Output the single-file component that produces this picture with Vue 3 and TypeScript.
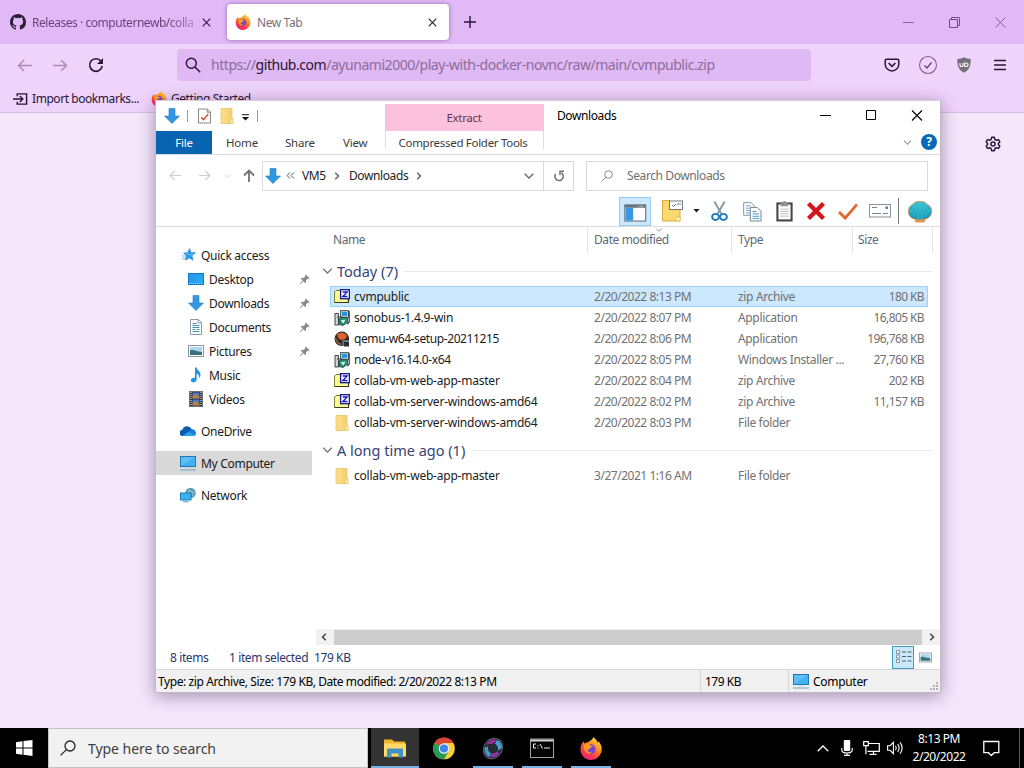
<script setup lang="ts">
interface NavItem { label: string; icon: string; nested?: boolean; pinned?: boolean; active?: boolean; gap?: boolean }
interface FileRow { name: string; icon: string; date: string; type: string; size: string; selected?: boolean; versioned?: boolean }
interface Group { title: string; files: FileRow[] }

const navItems: NavItem[] = [
  { label: 'Quick access', icon: 'star' },
  { label: 'Desktop', icon: 'desktop', nested: true, pinned: true },
  { label: 'Downloads', icon: 'down', nested: true, pinned: true },
  { label: 'Documents', icon: 'document', nested: true, pinned: true },
  { label: 'Pictures', icon: 'picture', nested: true, pinned: true },
  { label: 'Music', icon: 'music', nested: true },
  { label: 'Videos', icon: 'video', nested: true },
  { label: 'OneDrive', icon: 'cloud', gap: true },
  { label: 'My Computer', icon: 'computer', active: true, gap: true },
  { label: 'Network', icon: 'network', gap: true },
]

const groups: Group[] = [
  {
    title: 'Today (7)',
    files: [
      { name: 'cvmpublic', icon: 'zip', date: '2/20/2022 8:13 PM', type: 'zip Archive', size: '180 KB', selected: true },
      { name: 'sonobus-1.4.9-win', icon: 'installer', date: '2/20/2022 8:07 PM', type: 'Application', size: '16,805 KB' },
      { name: 'qemu-w64-setup-20211215', icon: 'qemu', date: '2/20/2022 8:06 PM', type: 'Application', size: '196,768 KB', versioned: true },
      { name: 'node-v16.14.0-x64', icon: 'installer', date: '2/20/2022 8:05 PM', type: 'Windows Installer ...', size: '27,760 KB', versioned: true },
      { name: 'collab-vm-web-app-master', icon: 'zip', date: '2/20/2022 8:04 PM', type: 'zip Archive', size: '202 KB' },
      { name: 'collab-vm-server-windows-amd64', icon: 'zip', date: '2/20/2022 8:02 PM', type: 'zip Archive', size: '11,157 KB' },
      { name: 'collab-vm-server-windows-amd64', icon: 'folder', date: '2/20/2022 8:03 PM', type: 'File folder', size: '' },
    ],
  },
  {
    title: 'A long time ago (1)',
    files: [
      { name: 'collab-vm-web-app-master', icon: 'folder', date: '3/27/2021 1:16 AM', type: 'File folder', size: '' },
    ],
  },
]

const tools = ['new-item', 'caret', 'cut', 'copy', 'paste', 'delete', 'check', 'rename']
const apps = [
  { icon: 'explorer', state: 'focused' },
  { icon: 'chrome', state: '' },
  { icon: 'orb', state: 'open' },
  { icon: 'terminal', state: 'open' },
  { icon: 'firefox', state: 'open' },
]
</script>

<template>
  <div class="screen">
    <svg class="defs" width="0" height="0" aria-hidden="true">
      <defs>
        <linearGradient id="ff-g" x1="0.8" y1="0" x2="0.2" y2="1">
          <stop offset="0" stop-color="#ffe03a" /><stop offset="0.4" stop-color="#ff8a1e" /><stop offset="0.75" stop-color="#ff3350" /><stop offset="1" stop-color="#e21d8a" />
        </linearGradient>
        <linearGradient id="sky" x1="0" y1="0" x2="1" y2="1">
          <stop offset="0" stop-color="#2196e8" /><stop offset="1" stop-color="#2fabf6" />
        </linearGradient>
        <linearGradient id="shell-g" x1="0" y1="0" x2="0" y2="1">
          <stop offset="0" stop-color="#3cc6d6" /><stop offset="1" stop-color="#1191b4" />
        </linearGradient>
        <linearGradient id="fold-g" x1="0" y1="0" x2="1" y2="0">
          <stop offset="0" stop-color="#fbdf88" /><stop offset="1" stop-color="#f3cf6e" />
        </linearGradient>

        <symbol id="github" viewBox="0 0 16 16"><path fill="#2a1f35" d="M8 0C3.58 0 0 3.58 0 8c0 3.54 2.29 6.53 5.47 7.59.4.07.55-.17.55-.38 0-.19-.01-.82-.01-1.49-2.01.37-2.53-.49-2.69-.94-.09-.23-.48-.94-.82-1.13-.28-.15-.68-.52-.01-.53.63-.01 1.08.58 1.23.82.72 1.21 1.87.87 2.33.66.07-.52.28-.87.51-1.07-1.78-.2-3.64-.89-3.64-3.95 0-.87.31-1.59.82-2.15-.08-.2-.36-1.02.08-2.12 0 0 .67-.21 2.2.82a7.6 7.6 0 0 1 4 0c1.53-1.04 2.2-.82 2.2-.82.44 1.1.16 1.92.08 2.12.51.56.82 1.27.82 2.15 0 3.07-1.87 3.75-3.65 3.95.29.25.54.73.54 1.48 0 1.07-.01 1.93-.01 2.2 0 .21.15.46.55.38A8.01 8.01 0 0 0 16 8c0-4.42-3.58-8-8-8z" /></symbol>
        <symbol id="firefox" viewBox="0 0 24 24">
          <path fill="url(#ff-g)" d="M1 13C1 9 3 6.500 4 4.500l1 2.300C6 5.800 7.300 5.500 8.500 5.700c1-.3 1.500-1 2.500-1.700C13 3 14 1.500 14.500 0c1.500 1.500 4 3.500 4.500 6l1-1.500C22 7 23.500 10 23.200 13.300 22.700 19.500 18 24 12 24S1 19 1 13z" />
          <circle cx="11.700" cy="12.800" r="5.200" fill="#7a45d0" />
          <path fill="#ff9a1f" d="M5 8c2-1.500 5-1 6.500 1 1 .1 2 .2 2.500.6-.6 1-2 1.300-2.800 1.500-.6 1.500-2 1.600-2.900 3 1 2 3.500 2.300 5 1.500-1 2-6 2.600-7.700-1.100C4.500 12 4.300 10 5 8z" />
        </symbol>
        <symbol id="x" viewBox="0 0 10 10"><path d="M.8.800l8.400 8.400M9.200.800L.8 9.200" fill="none" stroke="currentColor" stroke-width="1.200" /></symbol>
        <symbol id="arrow" viewBox="0 0 16 14"><path d="M7.500 1L1.500 7l6 6M1.500 7H16" fill="none" stroke="currentColor" stroke-width="1.500" /></symbol>
        <symbol id="reload" viewBox="0 0 16 16"><path d="M13 4.200A6.300 6.300 0 1 0 14.200 9" fill="none" stroke="currentColor" stroke-width="1.600" /><path d="M15 1v6H9z" fill="currentColor" /></symbol>
        <symbol id="lens" viewBox="0 0 16 16"><circle cx="6.300" cy="6.300" r="5" fill="none" stroke="currentColor" stroke-width="1.500" /><path d="M10 10l5.200 5.200" stroke="currentColor" stroke-width="1.500" /></symbol>
        <symbol id="lens-win" viewBox="0 0 16 16"><circle cx="10" cy="6" r="5" fill="none" stroke="currentColor" stroke-width="1.300" /><path d="M6.400 9.600L.6 15.400" stroke="currentColor" stroke-width="1.300" /></symbol>
        <symbol id="pocket" viewBox="0 0 16 14"><path d="M2.500 1.200h11q1.300 0 1.300 1.300v4C14.800 10 11.500 13 8 13S1.200 10 1.200 6.500v-4q0-1.300 1.300-1.300z" fill="none" stroke="currentColor" stroke-width="1.500" /><path d="M4.600 5L8 8.300 11.400 5" fill="none" stroke="currentColor" stroke-width="1.600" /></symbol>
        <symbol id="import" viewBox="0 0 16 14"><path d="M4.500 4V1.500h10v11h-10V10M0 7h10M7.300 3.800L10.500 7 7.300 10.200" fill="none" stroke="currentColor" stroke-width="1.500" /></symbol>
        <symbol id="gear" viewBox="0 0 24 24"><path d="M10 2h4l.8 3.200 2.200 1.200 3.200-1 2 3.500L20 11.200v1.600l2.200 2.300-2 3.500-3.200-1-2.200 1.200L14 22h-4l-.8-3.200L7 17.600l-3.200 1-2-3.500L4 12.800v-1.600L1.800 8.900l2-3.500 3.200 1 2.200-1.200z" fill="none" stroke="currentColor" stroke-width="2.200" stroke-linejoin="round" /><circle cx="12" cy="12" r="3.100" fill="none" stroke="currentColor" stroke-width="2.200" /></symbol>

        <symbol id="down" viewBox="0 0 16 16"><path d="M5 .5h6v7.500h4.500L8 15.600.5 8H5z" fill="#3296e0" stroke="#2680c8" stroke-width=".6" /></symbol>
        <symbol id="props" viewBox="0 0 14 16"><path d="M.5.500H10L13.500 4v11.500H.5z" fill="#fff" stroke="#7b7b7b" /><path d="M10 .5V4h3.500" fill="none" stroke="#7b7b7b" /><path d="M3.500 9.500L6 12l5-6" fill="none" stroke="#d0452e" stroke-width="1.600" /></symbol>
        <symbol id="folder" viewBox="0 0 16 16"><path d="M2 .5h11V10l1 .7v4.800H2z" fill="url(#fold-g)" stroke="#e3bf61" stroke-width=".7" /><path d="M11.500 11H14v4.500h-2.500z" fill="#fff0b8" stroke="#e3bf61" stroke-width=".5" /></symbol>
        <symbol id="star" viewBox="0 0 16 16"><path d="M9.500 1.500l1.500 4 4.500.2-3.500 3 1.200 4.600-4-2.300-4 2.300 1-4.600L3.500 6l4.300-.4z" fill="#259cec" stroke="#187cc4" stroke-width=".5" /><path d="M1.500 9h4M2.500 11.500h3M6 6l4 2 3-1" stroke="#74c3f6" stroke-width="1" fill="none" /></symbol>
        <symbol id="desktop" viewBox="0 0 16 16"><rect x=".5" y="2.500" width="15" height="11" fill="url(#sky)" stroke="#1678be" /><path d="M1 12.500h14" stroke="#9fd6f8" stroke-dasharray="1 1" /></symbol>
        <symbol id="document" viewBox="0 0 16 16"><path d="M2.500.500h8L13.500 3.500v12h-11z" fill="#fff" stroke="#8c9aa3" /><path d="M4.500 4.500h4M4.500 6.500h7M4.500 8.500h7M4.500 10.500h3M9 10.500h2.500M4.500 12.500h7" stroke="#3a93b4" /><path d="M10 1v3h3" fill="none" stroke="#8c9aa3" /></symbol>
        <symbol id="picture" viewBox="0 0 16 16"><rect x=".5" y="2.500" width="15" height="11" fill="#fff" stroke="#8b969e" /><rect x="2" y="4" width="12" height="8" fill="#a9d6ef" /><path d="M2 7.500c4-1.500 6 1.500 12 1.500v3H2z" fill="#3c7184" /></symbol>
        <symbol id="music" viewBox="0 0 16 16"><path d="M7 .5h1.700c.4 3 4 3.800 3.800 7.200-.1 1.700-.8 2.700-1.800 3.600.8-2.600-.2-4.100-2-4.800v6c0 2-2 3.200-4.200 2.800C2.500 14.900 2.300 12 4.500 11.100 5.500 10.700 6.300 10.700 7 11z" fill="#2196e8" /></symbol>
        <symbol id="video" viewBox="0 0 16 16"><rect x="1.500" y=".5" width="13" height="15" fill="#2d2d35" stroke="#6d6d74" /><path d="M3 1v14M13 1v14" stroke="#e9e9ec" stroke-width="1.200" stroke-dasharray="1 1" /><path d="M4.500 1.500h7v6h-7zM4.500 8.500h7v6h-7z" fill="#4a78c8" /><path d="M4.500 5l3-2 4 3v1.500h-7zM4.500 12l3-2 4 3v1.500h-7z" fill="#b98344" /></symbol>
        <symbol id="cloud" viewBox="0 0 16 16"><path d="M3 13a3 3 0 0 1-.6-6A5 5 0 0 1 11.500 6C14.500 6.500 16 8.200 16 10.200 16 12 14.800 13 13 13z" fill="#1680d8" /><path d="M2.400 7A5 5 0 0 1 11.500 6l-4 3L3 13a3 3 0 0 1-.6-6z" fill="#0a5cab" /><path d="M2.500 12.800L9 9l6 3.200c-.5.500-1.200.8-2 .8H3z" fill="#2ba2ee" /></symbol>
        <symbol id="computer" viewBox="0 0 16 16"><rect x=".5" y="1.500" width="15" height="10" fill="#42b2f4" stroke="#2278ae" /><path d="M1 2h14L1 11z" fill="#7accf8" opacity=".5" /><path d="M5 13h6" stroke="#c5d5df" /><path d="M0 15h16" stroke="#6aa5c7" /></symbol>
        <symbol id="network" viewBox="0 0 16 16"><circle cx="10.500" cy="6" r="5.300" fill="#5f9ab8" /><path d="M8 1.500c3 2 5 5 5 8M7 5c3-1 6-1 9 1" stroke="#a9cbd9" fill="none" stroke-width=".8" /><rect x=".5" y="6" width="10.500" height="7" fill="#41b1ee" stroke="#1c7eb6" /><path d="M3 14.800h5.500" stroke="#4d9ec7" /></symbol>
        <symbol id="pin" viewBox="0 0 12 12"><path d="M7.300.5L11.500 4.700l-1.200.7L9.200 5.300 7.700 7c.3 1.300.1 2.200-.7 3.100L4.800 8 1 11.400.6 11 4 7.200 1.900 5c.9-.8 1.800-1 3.100-.7l1.700-1.500-.1-1.100z" fill="#858d93" /></symbol>

        <symbol id="zip" viewBox="0 0 16 16"><path d="M.6 3l1.500-1.500H7v11.900H.6z" fill="#ffffa6" stroke="#77772a" /><path d="M.6 13.500H14.500V10" fill="none" stroke="#39391c" stroke-width="1.200" /><path d="M1.200 5H13v7.900H1.200z" fill="#fbfb8e" /><rect x="6.600" y=".7" width="8.800" height="9" fill="#fff" stroke="#15158e" stroke-width="1.300" /><path d="M8.700 3h4.500L8.700 7.500h4.700" fill="none" stroke="#1717c4" stroke-width="1.300" /></symbol>
        <symbol id="installer" viewBox="0 0 16 16"><rect x="6.500" y=".5" width="8" height="7" fill="#b9c4cb" stroke="#566" /><rect x="8" y="1.800" width="5" height="4" fill="#2295d8" /><path d="M15.200 1v11l-2 2" fill="none" stroke="#303840" stroke-width="1.200" /><path d="M1 3.500h3.500v11.500H1zM3 7h5" fill="#cfd4d6" stroke="#444" stroke-width="1" /><path d="M5 9l3.500-1.800 5 1v4L9 15.500l-4-1z" fill="#288e75" stroke="#21403a" stroke-width=".8" /><path d="M6.500 10.500l5-1-2 4z" fill="#d8f4e8" /></symbol>
        <symbol id="qemu" viewBox="0 0 16 16"><circle cx="7.800" cy="7.800" r="7.300" fill="#332725" /><path d="M3 3.500C6 1 10 1 12.500 4c1 2-1 4-3 4.500C7 9 4 9 3 3.500z" fill="#df642c" /><path d="M1.500 7c1 4 4 6 6 6.300" stroke="#8e604c" fill="none" stroke-width="1.500" /><path d="M8.500 9h6v6h-6z" fill="#687986" /><path d="M10 11h5v4.500h-5z" fill="#252f35" /></symbol>

        <symbol id="pane" viewBox="0 0 24 20"><rect x=".7" y="2" width="22" height="17" fill="#fff" stroke="#687984" stroke-width="1.200" /><path d="M1 3.500h21.500" stroke="#67737b" stroke-width="3" /><rect x="1.500" y="5" width="8" height="13.500" fill="#3499e1" /><path d="M15 3.500h6" stroke="#fff" stroke-dasharray="1 1" /></symbol>
        <symbol id="new-item" viewBox="0 0 22 22"><path d="M.5.500h7V5H18v16H.5z" fill="#fbd96f" stroke="#d9ae3e" /><path d="M14 17h4v4h-4z" fill="#fff2b6" stroke="#d9ae3e" stroke-width=".6" /><rect x="7.500" y="1" width="13" height="8.500" fill="#fff" stroke="#777" /><path d="M10 5l1.500 1.500L14 4M15 4h4" stroke="#5681a0" fill="none" /></symbol>
        <symbol id="caret" viewBox="0 0 8 5"><path d="M0 0h8L4 4.500z" fill="#222" /></symbol>
        <symbol id="cut" viewBox="0 0 18 22"><path d="M3.500 1l7.500 13M14.500 1L7 14" stroke="#8a98a2" stroke-width="2" fill="none" /><ellipse cx="4.800" cy="17.300" rx="3.600" ry="3.200" fill="none" stroke="#1a78bd" stroke-width="2" /><ellipse cx="13.200" cy="17.300" rx="3.600" ry="3.200" fill="none" stroke="#1a78bd" stroke-width="2" /></symbol>
        <symbol id="copy" viewBox="0 0 20 22"><path d="M.7 1.700h8l3 3V15H.7z" fill="#fff" stroke="#7f95a2" /><path d="M3 5h5M3 7.500h4M3 10h4M3 12.500h4" stroke="#6da3c5" /><path d="M7.700 6.700H15l4 4V21H7.700z" fill="#fff" stroke="#6c7f8b" /><path d="M10 11h4M10 13.500h7M10 16h7M10 18.500h7" stroke="#3f8fc2" /></symbol>
        <symbol id="paste" viewBox="0 0 18 22"><rect x="1.500" y="3" width="15" height="18" fill="#fff" stroke="#4b4341" stroke-width="2.200" /><path d="M5 2h2.500a1.500 1.500 0 0 1 3 0H13v4H5z" fill="#8c9295" /><path d="M4.500 9h9M4.500 11.500h9M4.500 14h9M4.500 16.500h9" stroke="#b7bcc0" /></symbol>
        <symbol id="delete" viewBox="0 0 20 20"><path d="M2.500 2.500l15 15M17.500 2.500l-15 15" stroke="#d4141c" stroke-width="4.300" /></symbol>
        <symbol id="check" viewBox="0 0 22 18"><path d="M1.500 9.500l6.500 6.500L20.500 1.500" fill="none" stroke="#e2682d" stroke-width="3" /></symbol>
        <symbol id="rename" viewBox="0 0 22 14"><rect x=".5" y=".5" width="21" height="12.500" fill="#fff" stroke="#87929a" /><path d="M3 3.500h5M3 9.500h9M14 9.500h5" stroke="#79868f" /><rect x="16.500" y="2.500" width="2.500" height="2.500" fill="#4b84b0" /></symbol>
        <symbol id="shell" viewBox="0 0 24 22"><path d="M6 17L7.500 21.500h9l1.500-4.500z" fill="#de9b58" /><path d="M12 .7c3-.4 5.500.5 7.500 3 3 1 4.300 4 4 7.500-.2 3-2.500 6.300-6 6.600L12 19l-5.500-1.200C3 17.500.7 14.500.5 11.200.3 7.700 1.500 4.700 4.500 3.700 6.500 1.200 9 .3 12 .7z" fill="url(#shell-g)" stroke="#c28b50" stroke-width=".9" /><path d="M12 18.500V2M11 18L6.500 4M13 18l4.500-14M10 18L2 9M14 18l8-9" stroke="#62d6e0" stroke-width=".7" opacity=".6" fill="none" /></symbol>
        <symbol id="chev-r" viewBox="0 0 6 8"><path d="M1.200.800L4.500 4 1.200 7.200" fill="none" stroke="currentColor" stroke-width="1.500" /></symbol>
        <symbol id="chev-d" viewBox="0 0 10 6"><path d="M.7.700L5 5 9.300.700" fill="none" stroke="currentColor" stroke-width="1.300" /></symbol>

        <symbol id="explorer" viewBox="0 0 24 22"><path d="M1 2h8l2 2h11v15H1z" fill="#eeb62d" /><path d="M1 6h22v13H1z" fill="#ffda68" /><path d="M4 12q0-1 1-1h14q1 0 1 1v8h-4.500v-4h-7v4H4z" fill="#3f92c4" /></symbol>
        <symbol id="chrome" viewBox="0 0 24 24"><circle cx="12" cy="12" r="11.300" fill="#f9cc3a" /><path d="M12 12L2.200 6.300A11.300 11.300 0 0 1 21.800 6.300H12z" fill="#dc4437" /><path d="M2.200 6.300A11.300 11.300 0 0 0 12 23.300L16.700 15 12 12z" fill="#249b5b" /><circle cx="12" cy="12" r="5.500" fill="#f5f5f5" /><circle cx="12" cy="12" r="4.300" fill="#4485ed" /></symbol>
        <symbol id="orb" viewBox="0 0 24 24"><ellipse cx="12" cy="12" rx="9.500" ry="11.300" transform="rotate(35 12 12)" fill="#252a35" stroke="#626574" /><path d="M5 8Q9 1 16 3L12 7Q7 7 5 8z" fill="#a02c9e" /><path d="M16 3q6 2 5 9l-4 2q0-5-3-7z" fill="#4b9fd0" /><path d="M8 21q-5-2-5-10l4-1q-1 5 3 7z" fill="#4598c9" /><path d="M18 18q-4 4-10 3l3-4q4 0 6-3z" fill="#8b35a5" /><circle cx="12" cy="12" r="5" fill="#272b34" /></symbol>
        <symbol id="terminal" viewBox="0 0 24 20"><rect x=".5" y=".5" width="23" height="18.500" fill="#050505" stroke="#a3a3a3" /><path d="M1 2h22" stroke="#d2d2d2" stroke-width="2" /><path d="M6 5.500H3.500v4H6M8 6.500v1M8 9v1M10 5.500l2.500 4.500M14 9.500h6" stroke="#eee" fill="none" /></symbol>
      </defs>
    </svg>

    <header class="tabstrip">
      <div class="tab">
        <svg class="i16"><use href="#github" /></svg>
        <span class="tab-title faded">Releases · computernewb/colla</span>
        <svg class="i9"><use href="#x" /></svg>
      </div>
      <div class="tab current">
        <svg class="i16"><use href="#firefox" /></svg>
        <span class="tab-title">New Tab</span>
        <svg class="i9"><use href="#x" /></svg>
      </div>
      <svg class="plus" viewBox="0 0 12 12"><path d="M6 0v12M0 6h12" stroke="#2b1538" stroke-width="1.400" /></svg>
      <div class="browser-controls">
        <svg width="11" height="11"><path d="M0 5.500h11" stroke="#87609d" /></svg>
        <svg width="11" height="11"><path d="M.5 2.500h8v8h-8zM2.500 2V.500h8v8H9" fill="none" stroke="#754c89" /></svg>
        <svg width="11" height="11"><path d="M.5.500l10 10M10.500.500l-10 10" fill="none" stroke="#87609d" /></svg>
      </div>
    </header>

    <nav class="navbar">
      <svg class="nav-arrow"><use href="#arrow" /></svg>
      <svg class="nav-arrow forward"><use href="#arrow" /></svg>
      <svg class="i16 reload"><use href="#reload" /></svg>
      <div class="urlbar">
        <svg class="i16"><use href="#lens" /></svg>
        <span class="url">https://<b>github.com</b>/ayunami2000/play-with-docker-novnc/raw/main/cvmpublic.zip</span>
      </div>
      <div class="nav-actions">
        <svg class="pocket"><use href="#pocket" /></svg>
        <svg width="20" height="20" viewBox="0 0 20 20"><circle cx="10" cy="10" r="8.500" fill="none" stroke="#805e90" stroke-width="1.100" /><path d="M6.500 10.500L9 13l4.500-5.500" fill="none" stroke="#643e76" stroke-width="1.200" /></svg>
        <svg class="shield" width="16" height="16" viewBox="0 0 16 16"><path d="M8 .3C10 1.500 12 2 14.700 2c.2 6-1 11-6.700 13.700C2.300 13 1.100 8 1.300 2 4 2 6 1.500 8 .3z" fill="#77717b" /><path d="M4 6v2.500q0 1 1.500 1T7 8.500V6M8.700 6v3.500h1.600q1.800 0 1.800-1.700T10.300 6z" fill="none" stroke="#fff" stroke-width="1.100" /></svg>
        <svg width="12" height="12"><path d="M0 1.500h12M0 6h12M0 10.500h12" stroke="#2b1538" stroke-width="1.500" /></svg>
      </div>
    </nav>

    <div class="bookmarks">
      <svg class="import"><use href="#import" /></svg>
      <span class="bookmark-import">Import bookmarks...</span>
      <svg class="i16"><use href="#firefox" /></svg>
      <span class="bookmark-start">Getting Started</span>
    </div>

    <main class="newtab">
      <svg class="gear"><use href="#gear" /></svg>
    </main>

    <section class="window">
      <div class="ribbon">
        <div class="ribbon-left">
          <div class="quickbar">
            <svg class="i16"><use href="#down" /></svg>
            <i class="vr"></i>
            <svg class="props"><use href="#props" /></svg>
            <svg class="i16 qb-folder"><use href="#folder" /></svg>
            <svg class="qb-caret" width="7" height="7"><path d="M0 .7h7" stroke="#111" /><path d="M0 3h7L3.500 6.500z" fill="#111" /></svg>
            <i class="vr"></i>
          </div>
          <div class="ribbon-tabs">
            <span class="file-tab">File</span>
            <span class="t-home">Home</span>
            <span class="t-share">Share</span>
            <span class="t-view">View</span>
          </div>
        </div>
        <div class="context-tab">
          <div class="context-title">Extract</div>
          <div class="context-body">Compressed Folder Tools</div>
        </div>
        <div class="ribbon-right">
          <div class="titlebar">
            <span class="win-title">Downloads</span>
            <div class="win-controls">
              <svg width="11" height="11"><path d="M0 4.500h11" stroke="#000" /></svg>
              <svg width="11" height="11"><path d="M.5-.5h9v9h-9z" fill="none" stroke="#000" /></svg>
              <svg width="11" height="11"><path d="M0-.5l10 10M10-.5l-10 10" stroke="#000" stroke-width="1.100" /></svg>
            </div>
          </div>
          <div class="help-row">
            <svg class="help-chev"><use href="#chev-d" /></svg>
            <span class="help">?</span>
          </div>
        </div>
      </div>

      <div class="address-row">
        <svg class="a-back"><use href="#arrow" /></svg>
        <svg class="a-back fwd"><use href="#arrow" /></svg>
        <svg class="a-recent"><use href="#chev-d" /></svg>
        <svg class="a-up" viewBox="0 0 12 14"><path d="M1 6.500l5-5 5 5M6 1.500V13" fill="none" stroke="#717171" stroke-width="1.800" /></svg>
        <div class="path">
          <svg class="i16"><use href="#down" /></svg>
          <svg class="laquo" viewBox="0 0 9 7"><path d="M4 .5L1 3.500l3 3M8 .5L5 3.500l3 3" fill="none" stroke="#555" /></svg>
          <span class="crumb-vm">VM5</span>
          <svg class="chev"><use href="#chev-r" /></svg>
          <span class="crumb-dl">Downloads</span>
          <svg class="chev"><use href="#chev-r" /></svg>
          <svg class="path-drop"><use href="#chev-d" /></svg>
        </div>
        <div class="refresh">
          <svg width="12" height="12" viewBox="0 0 12 12"><path d="M8.300 2.800A4.200 4.200 0 1 1 2.600 4" fill="none" stroke="#6d6d6d" stroke-width="1.500" /><path d="M1.500 1.300h4v4" fill="none" stroke="#6d6d6d" stroke-width="1.400" transform="matrix(-1 0 0 1 12.500 0)" /></svg>
        </div>
        <div class="searchbox">
          <svg class="s-lens"><use href="#lens-win" /></svg>
          <span>Search Downloads</span>
        </div>
      </div>

      <div class="toolbar">
        <span class="tool-active"><svg class="tool-pane"><use href="#pane" /></svg></span>
        <svg v-for="t in tools" :key="t" :class="['tool', t]"><use :href="'#' + t" /></svg>
        <i class="tool-sep"></i>
        <svg class="tool shell"><use href="#shell" /></svg>
      </div>

      <div class="content">
        <aside class="sidebar">
          <div v-for="item in navItems" :key="item.label" :class="['nav-item', { nested: item.nested, active: item.active, gap: item.gap }]">
            <svg class="i16"><use :href="'#' + item.icon" /></svg>
            <span>{{ item.label }}</span>
            <svg v-if="item.pinned" class="pin"><use href="#pin" /></svg>
          </div>
        </aside>

        <div class="listing">
          <div class="columns">
            <span class="c-name">Name</span>
            <span class="c-date">Date modified<svg class="sort"><use href="#chev-d" /></svg></span>
            <span class="c-type">Type</span>
            <span class="c-size">Size</span>
          </div>
          <div class="groups">
            <template v-for="g in groups" :key="g.title">
              <div class="group-head">
                <svg class="g-chev"><use href="#chev-d" /></svg>
                <span>{{ g.title }}</span>
                <i></i>
              </div>
              <div v-for="f in g.files" :key="f.name + f.icon" :class="['row', { selected: f.selected, versioned: f.versioned }]">
                <svg class="i16"><use :href="'#' + f.icon" /></svg>
                <span class="r-name">{{ f.name }}</span>
                <span class="r-date">{{ f.date }}</span>
                <span class="r-type">{{ f.type }}</span>
                <span class="r-size">{{ f.size }}</span>
              </div>
            </template>
          </div>
          <div class="hscroll">
            <svg class="chev left"><use href="#chev-r" /></svg>
            <div class="thumb"></div>
            <svg class="chev"><use href="#chev-r" /></svg>
          </div>
        </div>
      </div>

      <div class="details">
        <span class="d-count">8 items</span>
        <span class="d-sel">1 item selected</span>
        <span class="d-size">179 KB</span>
        <div class="views">
          <span class="view-on">
            <svg width="17" height="14"><path d="M1.500.500h3v3h-3zM1.500 5h3v3h-3zM1.500 9.500h3v3h-3z" fill="#fff" stroke="#6d7e89" stroke-width=".8" /><path d="M7 2h4M12.500 2h4M7 6.500h4M12.500 6.500h4M7 11h4M12.500 11h4" stroke="#4d6370" /></svg>
          </span>
          <svg class="view-thumb"><use href="#picture" /></svg>
        </div>
      </div>

      <footer class="statusbar">
        <span class="s-info">Type: zip Archive, Size: 179 KB, Date modified: 2/20/2022 8:13 PM</span>
        <span class="s-size">179 KB</span>
        <span class="s-zone"><svg class="i16"><use href="#computer" /></svg><em>Computer</em></span>
        <svg class="grip" width="9" height="9"><path d="M6 1h2M3 4h2M6 4h2M0 7h2M3 7h2M6 7h2" stroke="#b4b4b4" stroke-width="2" /></svg>
      </footer>
    </section>

    <div class="taskbar">
      <div class="start">
        <svg width="17" height="16" viewBox="0 0 17 16"><path d="M0 2.200L6.500 1.200V7.400H0zM7.500 1.100L16.500 0v7.400h-9zM0 8.500h6.500v6.200L0 13.800zM7.500 8.500h9V16l-9-1.200z" fill="#fff" /></svg>
      </div>
      <div class="task-search">
        <svg class="i16"><use href="#lens-win" /></svg>
        <span>Type here to search</span>
      </div>
      <div class="apps">
        <span v-for="a in apps" :key="a.icon" :class="['app', a.state]"><svg class="app-icon"><use :href="'#' + a.icon" /></svg></span>
      </div>
      <div class="tray">
        <svg width="12" height="7" viewBox="0 0 12 7"><path d="M.7 6.300L6 1l5.300 5.300" fill="none" stroke="#fff" stroke-width="1.300" /></svg>
        <svg class="mic" width="12" height="16" viewBox="0 0 12 16"><rect x="2.800" y="0" width="6.400" height="11" rx="1" fill="#fff" /><path d="M.8 8v2.500Q1.500 13 6 13t5.200-2.500V8M6 13v2.500M3 15.400h6" fill="none" stroke="#fff" stroke-width="1.100" /></svg>
        <svg width="17" height="14" viewBox="0 0 17 14"><path d="M5.500 2.500h10.800v7.800H4.500M10.500 10.300V13M6.500 13.300h7M.7.700h4.600v4H.7zM2.900 4.700v8.500" fill="none" stroke="#fff" stroke-width="1.200" /></svg>
        <svg class="speaker" width="17" height="14" viewBox="0 0 17 14"><path d="M.6 4.700h2.500L6.400 1.300v11.400L3.100 9.300H.6zM8.500 4.800q1.500 2.200 0 4.400M10.700 3.200q2.800 3.800 0 7.600M13 1.400q4.300 5.600 0 11.200" fill="none" stroke="#fff" stroke-width="1.100" /></svg>
        <div class="clock"><span class="time">8:13 PM</span><span class="day">2/20/2022</span></div>
        <svg width="17" height="17" viewBox="0 0 17 17"><path d="M.8 1.500h15v11.200h-4.600L8.300 15.500l-2.800-2.800H.8z" fill="none" stroke="#fff" stroke-width="1.300" /></svg>
        <i class="peek"></i>
      </div>
    </div>
  </div>
</template>

<style>
html, body { margin: 0; overflow: hidden; }
</style>

<style scoped>
.screen { position: relative; width: 1024px; height: 768px; overflow: hidden; display: flex; flex-direction: column; background: #f4e6fb; font: 12px/16px "Noto Sans", "Open Sans", sans-serif; letter-spacing: -0.4px; color: #000; white-space: nowrap; box-sizing: border-box; }
.screen *, .screen *::before { box-sizing: border-box; }
svg { display: block; flex: none; overflow: visible; }
.defs { position: absolute; }
.i16 { width: 16px; height: 16px; }
.i9 { width: 9px; height: 9px; }

.tabstrip { height: 44px; flex: none; background: #e0b9f6; display: flex; align-items: center; color: #2b1538; }
.tab { display: flex; align-items: center; height: 36px; width: 226px; padding: 0 14px 0 10px; }
.tab-title { margin: 1px 0 0 6px; flex: 1; color: #684579; }
.tab-title.faded { flex: none; width: 166px; margin-right: 4px; letter-spacing: -0.46px; mask-image: linear-gradient(to right, #000 82%, rgba(0, 0, 0, 0.25)); }
.tab.current { width: 222px; margin-left: 1px; padding: 0 12px 0 8px; background: #fff; border-radius: 4px; box-shadow: 0 0 4px rgba(80, 20, 110, 0.5); }
.tab.current .tab-title { color: #77707c; }
.plus { width: 12px; height: 12px; margin-left: 15px; }
.browser-controls { display: flex; gap: 35px; margin-left: auto; padding-right: 18px; }

.navbar { height: 42px; flex: none; background: #eed3fb; display: flex; align-items: center; padding-left: 17px; color: #2b1538; }
.nav-arrow { width: 15px; height: 13px; color: #a88bb7; }
.nav-arrow.forward { transform: scaleX(-1); margin-left: 21px; }
.reload { margin-left: 20px; }
.urlbar { width: 634px; height: 32px; margin-left: 73px; padding-left: 8px; display: flex; align-items: center; background: #deb9f3; border-radius: 4px; }
.url { margin-left: 10px; font-size: 14px; color: #8d6c9c; letter-spacing: -0.46px; }
.url b { font-weight: 400; color: #2b1538; }
.nav-actions { display: flex; align-items: center; margin-left: 73px; }
.pocket { width: 16px; height: 14px; margin-right: 18px; }
.shield { margin: 0 22px 0 18px; }

.bookmarks { height: 27px; flex: none; background: #eed3fb; border-bottom: 1px solid #d6bfe0; display: flex; align-items: center; padding-left: 13px; color: #2b1538; letter-spacing: -0.44px; }
.import { width: 15px; height: 14px; }
.bookmark-import { width: 108px; margin: 0 11px 0 4px; }
.bookmark-start { margin-left: 4px; }
.newtab { flex: 1; display: flex; justify-content: flex-end; align-items: flex-start; padding: 23px 23px 0 0; }
.gear { width: 16px; height: 16px; color: #2b1538; }

.window { position: absolute; left: 155px; top: 100px; width: 786px; height: 593px; display: flex; flex-direction: column; background: #fff; border: 1px solid #c3b7c9; border-top-color: #dccbe2; box-shadow: 0 3px 16px rgba(50, 25, 65, 0.42); }
.ribbon { height: 54px; flex: none; display: flex; border-bottom: 1px solid #dadbdc; }
.ribbon-left { width: 229px; }
.quickbar { height: 30px; display: flex; align-items: center; padding-left: 8px; }
.vr { width: 1px; height: 12px; background: #999; margin-left: 7px; }
.props { width: 13px; height: 16px; margin-left: 10px; }
.qb-folder { margin-left: 8px; }
.qb-caret { margin: 3px 1px 0 7px; }
.ribbon-tabs { height: 23px; display: flex; align-items: center; font-size: 11.5px; color: #3b3b3b; letter-spacing: -0.2px; }
.file-tab { width: 56px; height: 23px; line-height: 23px; text-align: center; background: #0863b0; color: #fff; }
.t-home { width: 59px; padding-left: 14px; }
.t-share { width: 58px; padding-left: 14px; }
.t-view { padding-left: 14px; }
.context-tab { width: 159px; margin-top: 3px; text-align: center; font-size: 11.5px; letter-spacing: -0.3px; color: #3b3b3b; }
.context-title { height: 27px; line-height: 28px; padding-right: 1px; background: #fcc2dd; color: #643349; }
.context-body { height: 18px; line-height: 24px; padding-right: 3px; border-left: 1px solid #ddd; border-right: 1px solid #ddd; }
.ribbon-right { flex: 1; }
.titlebar { height: 30px; display: flex; align-items: center; padding-left: 13px; }
.win-controls { display: flex; gap: 35px; margin-left: auto; padding-right: 17px; }
.help-row { height: 22px; display: flex; justify-content: flex-end; align-items: center; padding-right: 3px; color: #999; }
.help-chev { width: 9px; height: 5px; margin-right: 9px; }
.help { width: 16px; height: 16px; border-radius: 50%; background: #0a68b5; color: #fff; font-weight: 700; text-align: center; letter-spacing: 0; }

.address-row { height: 41px; flex: none; display: flex; align-items: center; padding-left: 13px; }
.a-back { width: 12px; height: 11px; color: #cecece; }
.a-back.fwd { transform: scaleX(-1); margin-left: 18px; }
.a-recent { width: 7px; height: 4px; margin-left: 13px; color: #d0d0d0; }
.a-up { width: 12px; height: 14px; margin: 1px 7px 0 12px; }
.path { width: 282px; height: 30px; border: 1px solid #d9d9d9; display: flex; align-items: center; padding: 0 9px 0 2px; color: #666; }
.path span { color: #222; }
.laquo { width: 9px; height: 7px; margin-left: 5px; }
.crumb-vm { width: 26px; margin: 0 6px 0 7px; }
.crumb-dl { width: 60px; margin: 0 7px 0 9px; }
.chev { width: 6px; height: 8px; }
.path-drop { width: 10px; height: 6px; margin-left: auto; }
.refresh { width: 30px; height: 30px; border: 1px solid #d9d9d9; border-left: 0; display: flex; align-items: center; justify-content: center; }
.searchbox { width: 342px; height: 30px; margin-left: 12px; border: 1px solid #d9d9d9; display: flex; align-items: center; padding-left: 14px; color: #6f6f6f; }
.s-lens { width: 12px; height: 12px; margin-right: 14px; color: #888; }

.toolbar { height: 31px; flex: none; display: flex; align-items: center; padding-left: 463px; border-bottom: 1px solid #dadbdc; }
.tool-active { width: 32px; height: 29px; background: #cce8ff; border: 1px solid #99cdf3; display: flex; align-items: center; justify-content: center; }
.tool-pane { width: 23px; height: 19px; margin-top: 2px; }
.new-item { width: 22px; height: 22px; margin-left: 11px; }
.caret { width: 7px; height: 4px; margin-left: 9px; }
.cut { width: 17px; height: 22px; margin-left: 11px; }
.copy { width: 19px; height: 21px; margin-left: 15px; }
.paste { width: 17px; height: 22px; margin-left: 14px; }
.delete { width: 20px; height: 20px; margin-left: 13px; }
.check { width: 22px; height: 17px; margin-left: 11px; }
.rename { width: 22px; height: 14px; margin-left: 10px; }
.tool-sep { width: 1px; height: 26px; background: #777; margin-left: 7px; }
.shell { width: 24px; height: 22px; margin: 1px 0 0 9px; }

.content { flex: 1; display: flex; min-height: 0; }
.sidebar { width: 156px; padding-top: 16px; color: #1b1b1b; letter-spacing: -0.3px; }
.nav-item { height: 24px; display: flex; align-items: center; padding-left: 24px; }
.nav-item span { margin: 1px 0 0 5px; }
.nav-item.nested { padding-left: 32px; }
.nav-item.gap { margin-top: 8px; }
.nav-item.active { background: #d9d9d9; }
.pin { width: 11px; height: 11px; margin: 1px 2px 0 auto; }

.listing { flex: 1; display: flex; flex-direction: column; }
.columns { height: 27px; flex: none; display: flex; line-height: 26px; color: #5e6a75; padding-left: 21px; }
.columns span { border-right: 1px solid #e5e5e5; }
.c-name { width: 255px; }
.c-date { width: 144px; padding-left: 6px; display: flex; }
.sort { width: 8px; height: 4px; margin: 1px 0 0 -14px; color: #888; }
.c-type { width: 121px; padding-left: 6px; }
.c-size { width: 80px; padding-left: 5px; }
.groups { flex: 1; }
.group-head { height: 32px; display: flex; align-items: center; padding: 2px 8px 0 10px; font-size: 14.5px; letter-spacing: 0; color: #344378; }
.group-head span { margin: 0 6px 0 5px; }
.group-head i { flex: 1; height: 1px; background: #e4eaec; }
.g-chev { width: 11px; height: 6px; color: #777; }
.group-head span { margin-left: 4px; }
.row { height: 21px; width: 598px; margin-left: 18px; padding: 0 4px 0 4px; display: flex; align-items: center; color: #717171; }
.row span { padding-top: 1px; }
.row.selected { background: #cce8ff; box-shadow: inset 0 0 0 1px #99d1ff; }
.r-name { width: 240px; margin-left: 4px; color: #1b1b1b; letter-spacing: -0.22px; }
.versioned .r-name { letter-spacing: -0.4px; }
.r-date { width: 144px; letter-spacing: -0.47px; }
.r-type { width: 121px; letter-spacing: -0.34px; }
.r-size { flex: 1; text-align: right; letter-spacing: -0.6px; }
.hscroll { height: 16px; flex: none; display: flex; align-items: center; justify-content: space-between; margin-left: 4px; padding: 0 5px; background: #f1f1f1; color: #444; }
.left { transform: scaleX(-1); }
.thumb { width: 588px; height: 15px; background: #cdcdcd; }

.details { height: 24px; flex: none; display: flex; align-items: center; padding: 0 8px 0 14px; color: #29386b; }
.details > span { padding-top: 2px; }
.d-count { width: 59px; }
.d-sel { width: 85px; }
.views { margin-left: auto; display: flex; align-items: center; gap: 5px; }
.view-on { width: 22px; height: 23px; background: #cbe8fa; border: 1px solid #3e9dbf; display: flex; align-items: center; justify-content: center; }
.view-thumb { width: 13px; height: 15px; }
.statusbar { height: 23px; flex: none; display: flex; align-items: center; background: #f0f0f0; border-top: 1px solid #d9d9d9; padding-left: 2px; }
.s-info { width: 542px; padding-top: 2px; letter-spacing: -0.41px; }
.s-size { width: 88px; border-left: 1px solid #d5d5d5; padding-left: 4px; line-height: 24px; height: 22px; letter-spacing: -0.5px; }
.s-zone { flex: 1; height: 22px; display: flex; align-items: center; border-left: 1px solid #d5d5d5; padding-left: 4px; }
.s-zone em { font-style: normal; margin: 2px 0 0 4px; letter-spacing: -0.3px; }
.grip { align-self: flex-end; margin: 0 1px 1px 0; }

.taskbar { height: 40px; flex: none; display: flex; background: #000; color: #fff; }
.start { width: 48px; display: flex; align-items: center; justify-content: center; }
.task-search { width: 320px; background: #f2f2f2; border: 1px solid #c2c2c2; color: #404040; display: flex; align-items: center; padding-left: 11px; font-size: 14px; letter-spacing: -0.05px; }
.task-search .i16 { color: #222; }
.task-search span { margin: 1px 0 0 12px; }
.apps { display: flex; margin-left: 3px; gap: 1px; }
.app { width: 48px; display: flex; align-items: center; justify-content: center; background: linear-gradient(#76b3e5, #76b3e5) center bottom / 0 2px no-repeat; }
.app.focused { background-color: #343434; background-size: 100% 2px; }
.app.open { background-size: 40px 2px; }
.app-icon { width: 24px; height: 23px; }
.tray { display: flex; align-items: center; margin-left: auto; gap: 10px; }
.mic { margin-left: 2px; }
.speaker { margin-left: -3px; }
.clock { width: 58px; display: flex; flex-direction: column; align-items: center; line-height: 18px; margin: 0 5px 0 -4px; letter-spacing: -0.45px; }
.peek { width: 1px; height: 40px; background: #555; margin: 0 4px 0 9px; }
</style>
